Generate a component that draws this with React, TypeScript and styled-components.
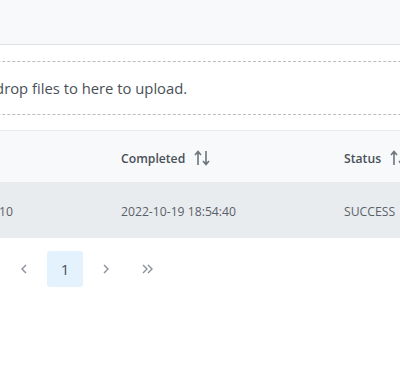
import React from "react";
import styled, { createGlobalStyle } from "styled-components";

const GlobalStyle = createGlobalStyle`
  html, body {
    margin: 0;
    padding: 0;
    background: #ffffff;
    overflow: hidden;
  }
  body {
    font-family: "Open Sans", "Noto Sans", sans-serif;
    color: #495057;
  }
`;

const Page = styled.div`
  margin-left: -118px;
  width: 780px;
`;

const UploadHeader = styled.div`
  height: 44px;
  background: #f8f9fa;
  border-bottom: 1px solid #dee2e6;
`;

const UploadContent = styled.div`
  padding: 16px 0 15px 0;
`;

const DropZone = styled.div`
  height: 52px;
  border-top: 1px dashed #b8bdc2;
  border-bottom: 1px dashed #b8bdc2;
  display: flex;
  align-items: center;
  padding-left: 46px;
  font-size: 14.8px;
  color: #495057;
`;

const Table = styled.div`
  border-top: 1px solid #e9ecef;
`;

const Row = styled.div<{ $head?: boolean }>`
  display: grid;
  grid-template-columns: repeat(3, 223px);
  height: ${(p) => (p.$head ? "51px" : "56px")};
  align-items: center;
  background: ${(p) => (p.$head ? "#f8f9fa" : "#e9ecef")};
  font-size: 12.2px;
`;

const Cell = styled.div<{ $head?: boolean }>`
  padding: 3px 0 0 16px;
  display: flex;
  align-items: center;
  gap: 9px;
  font-weight: ${(p) => (p.$head ? 600 : 400)};
  color: ${(p) => (p.$head ? "#495057" : "#5a6169")};
  white-space: nowrap;
`;

const Paginator = styled.div`
  display: flex;
  align-items: center;
  gap: 5px;
  padding: 13px 0 0 0;
  margin-left: 124px;
`;

const PageButton = styled.div<{ $active?: boolean }>`
  width: 36px;
  height: 36px;
  border-radius: 3px;
  display: flex;
  align-items: center;
  justify-content: center;
  background: ${(p) => (p.$active ? "#e3f2fd" : "transparent")};
  color: ${(p) => (p.$active ? "#495057" : "#8a9097")};
  font-size: 15px;
`;

const SortIcon = () => (
  <svg width="18" height="16" viewBox="0 0 18 16" fill="none" stroke="#6c757d" strokeWidth="1.6">
    <path d="M4 15V2M1 5l3-3.5L7 5" />
    <path d="M12 1v13M9 11l3 3.5L15 11" />
  </svg>
);

const Chevron = ({ dir, double }: { dir: "left" | "right"; double?: boolean }) => (
  <svg width="14" height="14" viewBox="0 0 14 14" fill="none" stroke="#8a9097" strokeWidth="1.4">
    {dir === "left" ? (
      <path d="M9 3L5 7l4 4" />
    ) : double ? (
      <>
        <path d="M3 3l4 4-4 4" />
        <path d="M8 3l4 4-4 4" />
      </>
    ) : (
      <path d="M5 3l4 4-4 4" />
    )}
  </svg>
);

const columns = ["Started", "Completed", "Status"];
const rows = [["2022-10-19 18:54:10", "2022-10-19 18:54:40", "SUCCESS"]];

export default function App() {
  return (
    <>
      <GlobalStyle />
      <Page>
        <UploadHeader />
        <UploadContent>
          <DropZone>Drag and drop files to here to upload.</DropZone>
        </UploadContent>
        <Table>
          <Row $head>
            {columns.map((c) => (
              <Cell $head key={c}>
                {c}
                <SortIcon />
              </Cell>
            ))}
          </Row>
          {rows.map((r, i) => (
            <Row key={i}>
              {r.map((v, j) => (
                <Cell key={j}>{v}</Cell>
              ))}
            </Row>
          ))}
        </Table>
        <Paginator>
          <PageButton>
            <Chevron dir="left" />
          </PageButton>
          <PageButton $active>1</PageButton>
          <PageButton>
            <Chevron dir="right" />
          </PageButton>
          <PageButton>
            <Chevron dir="right" double />
          </PageButton>
        </Paginator>
      </Page>
    </>
  );
}
